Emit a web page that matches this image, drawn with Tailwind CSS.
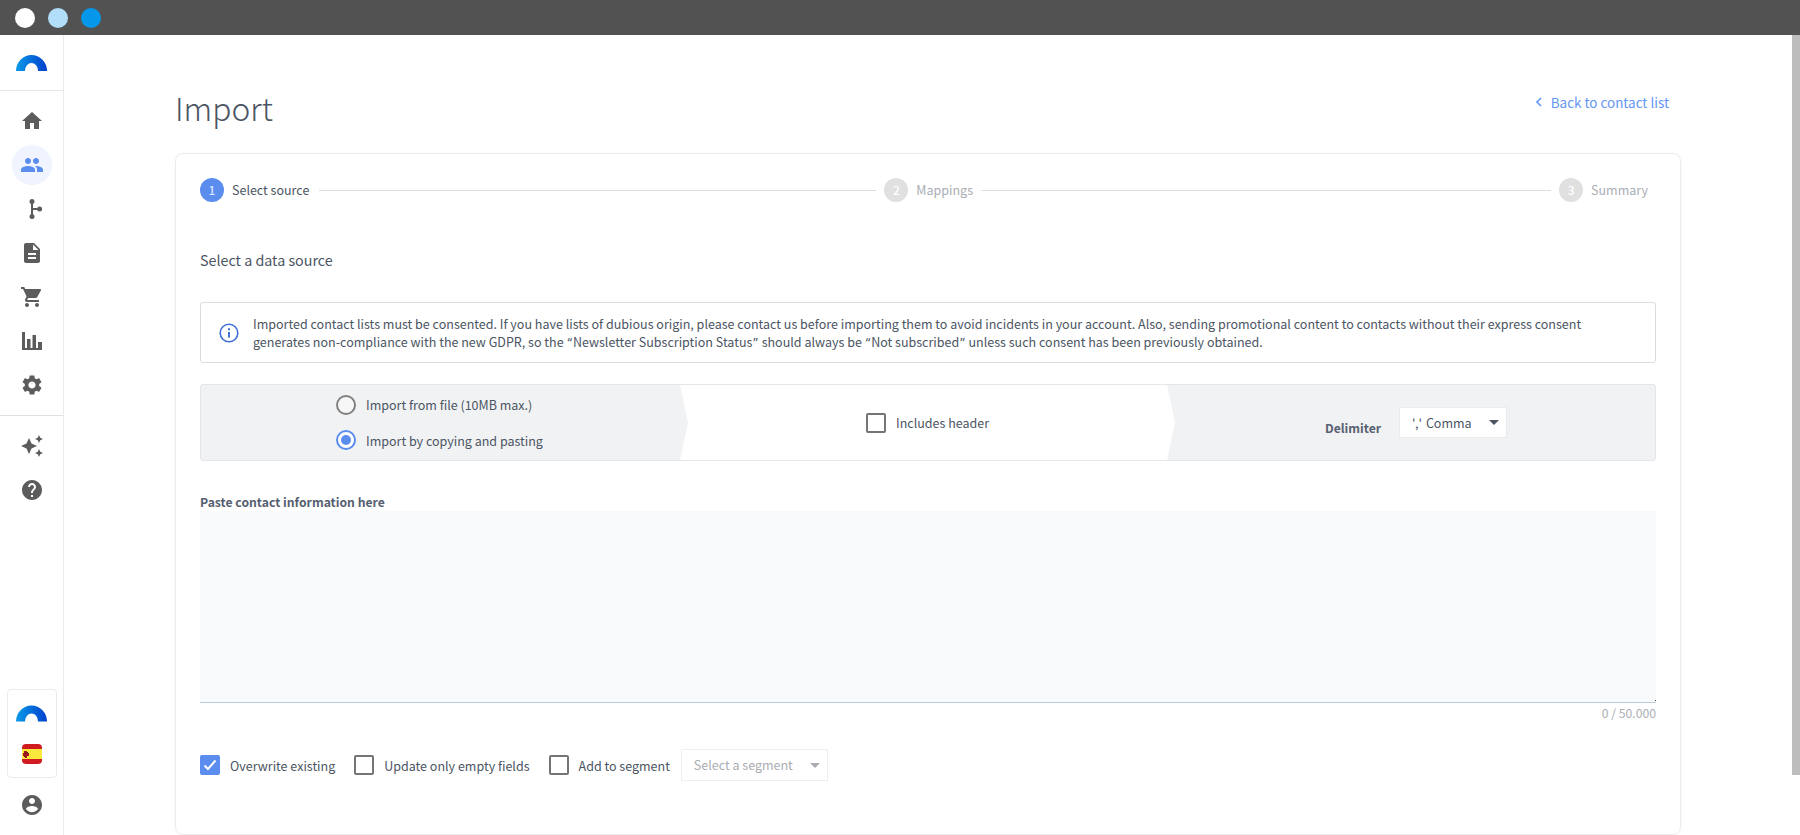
<!DOCTYPE html>
<html lang="en">
<head>
  <meta charset="UTF-8" />
  <meta name="viewport" content="width=device-width, initial-scale=1" />
  <title>Import</title>
  <script src="https://cdn.jsdelivr.net/npm/@tailwindcss/browser@4"></script>
</head>
<body class="relative h-[835px] overflow-hidden bg-white font-['Noto_Sans_CJK_SC',sans-serif] text-[#4b5563]">
  <svg class="absolute w-0 h-0" aria-hidden="true">
    <defs>
      <linearGradient id="logoGrad" x1="0" x2="1" y1="0" y2="0">
        <stop offset="0" stop-color="#0a9be8" />
        <stop offset="1" stop-color="#0040cc" />
      </linearGradient>
    </defs>
  </svg>

  <!-- window bar -->
  <div class="h-[35px] bg-[#525252] flex items-center gap-[13px] pl-[15px]">
    <span class="w-5 h-5 rounded-full bg-white"></span>
    <span class="w-5 h-5 rounded-full bg-[#b3defa]"></span>
    <span class="w-5 h-5 rounded-full bg-[#0598ea]"></span>
  </div>

  <div class="flex h-[800px]">
    <!-- sidebar -->
    <aside class="w-[64px] shrink-0 border-r border-[#ebebeb] flex flex-col text-[#5c5c5c]">
      <div class="h-[56px] border-b border-[#e6e6e6] flex justify-center pt-[20px] shrink-0">
        <svg width="31" height="16" viewBox="0 0 31 16"><path fill="url(#logoGrad)" d="M0 16A15.5 16 0 0 1 31 16H22A6.5 8 0 0 0 9 16Z" /></svg>
      </div>
      <nav class="flex flex-col gap-1 items-center pt-[10px] pb-[10px] border-b border-[#e0e0e0]">
        <a class="w-10 h-10 flex items-center justify-center"><svg class="w-6 h-6 fill-current" viewBox="0 0 24 24"><path d="M10 20v-6h4v6h5v-8h3L12 3 2 12h3v8z" /></svg></a>
        <a class="w-10 h-10 rounded-full bg-[#eff4fe] text-[#5b8def] flex items-center justify-center"><svg class="w-6 h-6 fill-current" viewBox="0 0 24 24"><path d="M16 11c1.66 0 2.99-1.34 2.99-3S17.66 5 16 5c-1.66 0-3 1.34-3 3s1.34 3 3 3zm-8 0c1.66 0 2.99-1.34 2.99-3S9.66 5 8 5C6.34 5 5 6.34 5 8s1.34 3 3 3zm0 2c-2.33 0-7 1.17-7 3.5V19h14v-2.5c0-2.33-4.67-3.5-7-3.5zm8 0c-.29 0-.62.02-.97.05 1.16.84 1.97 1.97 1.97 3.45V19h6v-2.5c0-2.33-4.67-3.5-7-3.5z" /></svg></a>
        <a class="w-10 h-10 flex items-center justify-center"><svg class="w-6 h-6 fill-current" viewBox="0 0 24 24"><path d="M11 6h2v12h-2z" /><path d="M12 11h7v2h-7z" /><circle cx="12" cy="4.6" r="2.5" /><circle cx="12" cy="19.4" r="2.5" /><circle cx="19.6" cy="12" r="2.5" /></svg></a>
        <a class="w-10 h-10 flex items-center justify-center"><svg class="w-6 h-6 fill-current" viewBox="0 0 24 24"><path d="M14 2H6c-1.1 0-1.99.9-1.99 2L4 20c0 1.1.89 2 1.99 2H18c1.1 0 2-.9 2-2V8l-6-6zm2 16H8v-2h8v2zm0-4H8v-2h8v2zm-3-5V3.5L18.5 9H13z" /></svg></a>
        <a class="w-10 h-10 flex items-center justify-center"><svg class="w-6 h-6 fill-current" viewBox="0 0 24 24"><path d="M7 18c-1.1 0-1.99.9-1.99 2S5.9 22 7 22s2-.9 2-2-.9-2-2-2zM1 2v2h2l3.6 7.59-1.35 2.45c-.16.28-.25.61-.25.96 0 1.1.9 2 2 2h12v-2H7.42c-.14 0-.25-.11-.25-.25l.03-.12.9-1.63h7.45c.75 0 1.41-.41 1.75-1.03l3.58-6.49c.08-.14.12-.31.12-.48 0-.55-.45-1-1-1H5.21l-.94-2H1zm16 16c-1.1 0-1.99.9-1.99 2s.89 2 1.99 2 2-.9 2-2-.9-2-2-2z" /></svg></a>
        <a class="w-10 h-10 flex items-center justify-center"><svg class="w-5 h-[18px] fill-current" viewBox="0 0 20 18"><path d="M0 0h3v18H0zM5 7h3.5v11H5zM10.5 3H14v15h-3.5zM16 10h4v8h-4zM0 16h20v2H0z" /></svg></a>
        <a class="w-10 h-10 flex items-center justify-center"><svg class="w-6 h-6 fill-current" viewBox="0 0 24 24"><path d="M19.14 12.94c.04-.3.06-.61.06-.94 0-.32-.02-.64-.07-.94l2.03-1.58c.18-.14.23-.41.12-.61l-1.92-3.32c-.12-.22-.37-.29-.59-.22l-2.39.96c-.5-.38-1.03-.7-1.62-.94l-.36-2.54c-.04-.24-.24-.41-.48-.41h-3.84c-.24 0-.43.17-.47.41l-.36 2.54c-.59.24-1.13.57-1.62.94l-2.39-.96c-.22-.08-.47 0-.59.22L2.74 8.87c-.12.21-.08.47.12.61l2.03 1.58c-.05.3-.09.63-.09.94s.02.64.07.94l-2.03 1.58c-.18.14-.23.41-.12.61l1.92 3.32c.12.22.37.29.59.22l2.39-.96c.5.38 1.03.7 1.62.94l.36 2.54c.05.24.24.41.48.41h3.84c.24 0 .44-.17.47-.41l.36-2.54c.59-.24 1.13-.56 1.62-.94l2.39.96c.22.08.47 0 .59-.22l1.92-3.32c.12-.22.07-.47-.12-.61l-2.01-1.58zM12 15.6c-1.98 0-3.6-1.62-3.6-3.6s1.62-3.6 3.6-3.6 3.6 1.62 3.6 3.6-1.62 3.6-3.6 3.6z" /></svg></a>
      </nav>
      <div class="flex flex-col gap-1 items-center pt-[10px]">
        <a class="w-10 h-10 flex items-center justify-center"><svg class="w-6 h-6 fill-current" viewBox="0 0 24 24"><path d="M19 9l1.25-2.75L23 5l-2.75-1.25L19 1l-1.25 2.75L15 5l2.75 1.25L19 9zm-7.5.5L9 4 6.5 9.5 1 12l5.5 2.5L9 20l2.5-5.5L17 12l-5.5-2.5zM19 15l-1.25 2.75L15 19l2.75 1.25L19 23l1.25-2.75L23 19l-2.75-1.25L19 15z" /></svg></a>
        <a class="w-10 h-10 flex items-center justify-center"><svg class="w-6 h-6 fill-current" viewBox="0 0 24 24"><path d="M12 2C6.48 2 2 6.48 2 12s4.48 10 10 10 10-4.48 10-10S17.52 2 12 2zm1 17h-2v-2h2v2zm2.07-7.75l-.9.92C13.45 12.9 13 13.5 13 15h-2v-.5c0-1.1.45-2.1 1.17-2.83l1.24-1.26c.37-.36.59-.86.59-1.41 0-1.1-.9-2-2-2s-2 .9-2 2H8c0-2.21 1.79-4 4-4s4 1.79 4 4c0 .88-.36 1.68-.93 2.25z" /></svg></a>
      </div>
      <div class="mt-auto flex flex-col items-center pb-[10px]">
        <div class="w-[50px] h-[89px] border border-[#ebebeb] rounded-[4px] flex flex-col items-center pt-[15px]">
          <svg width="31" height="17" viewBox="0 0 31 16"><path fill="url(#logoGrad)" d="M0 16A15.5 16 0 0 1 31 16H22A6.5 8 0 0 0 9 16Z" /></svg>
          <svg class="mt-[22px] rounded-[4px]" width="20" height="20" viewBox="0 0 20 20">
            <rect width="20" height="20" fill="#d01c1f" />
            <rect y="5" width="20" height="10" fill="#fbe83c" />
            <path fill="#a5171b" d="M2 7h3v2h2v3H5v2H3v-2H1V9h1z" />
            <path fill="#2b2b2b" d="M3 9h1v1H3zM5 8h1v1H5zM2 12h1v1H2z" />
          </svg>
        </div>
        <a class="w-10 h-10 mt-[7px] flex items-center justify-center"><svg class="w-6 h-6 fill-current" viewBox="0 0 24 24"><path d="M12 2C6.48 2 2 6.48 2 12s4.48 10 10 10 10-4.48 10-10S17.52 2 12 2zm0 3c1.66 0 3 1.34 3 3s-1.34 3-3 3-3-1.34-3-3 1.34-3 3-3zm0 14.2c-2.5 0-4.71-1.28-6-3.22.03-1.99 4-3.08 6-3.08 1.99 0 5.97 1.09 6 3.08-1.29 1.94-3.5 3.22-6 3.22z" /></svg></a>
      </div>
    </aside>

    <!-- main -->
    <main class="flex-1 pl-[111px] pr-[119px] pt-[50px]">
      <div class="h-[68px] flex justify-between items-start">
        <h1 class="text-[31.7px] leading-[44px] font-light">Import</h1>
        <a class="mt-[7px] flex items-center gap-[9px] text-[13.45px] leading-[20px] text-[#6496f5] pr-[12px]">
          <svg width="6" height="10" viewBox="0 0 6 10"><path d="M5 1 1 5l4 4" fill="none" stroke="currentColor" stroke-width="1.6" /></svg>
          Back to contact list
        </a>
      </div>

      <section class="h-[682px] border border-[#ececec] rounded-lg shadow-[0_1px_4px_rgba(0,0,0,0.04)] px-6 pt-6">
        <!-- stepper -->
        <div class="flex items-center text-[12.5px] pr-[8px]">
          <span class="w-6 h-6 rounded-full bg-[#5b8def] text-[#dbe7fd] text-[12px] font-medium flex items-center justify-center">1</span>
          <span class="ml-2">Select source</span>
          <span class="w-[557px] h-px bg-[#dedede] ml-[10px] mr-2"></span>
          <span class="w-6 h-6 rounded-full bg-[#e0e0e0] text-white text-[12px] font-medium flex items-center justify-center">2</span>
          <span class="ml-2 text-[#a9adb3]">Mappings</span>
          <span class="flex-1 h-px bg-[#dedede] mx-2"></span>
          <span class="w-6 h-6 rounded-full bg-[#e0e0e0] text-white text-[12px] font-medium flex items-center justify-center">3</span>
          <span class="ml-2 text-[#a9adb3]">Summary</span>
        </div>

        <h2 class="mt-[46px] text-[14.3px] leading-6">Select a data source</h2>

        <!-- notice -->
        <div class="mt-[30px] h-[61px] border border-[#dcdcdc] rounded-[3px] flex items-center pl-[18px] text-[12.53px] leading-[18px] text-[#4b5563]">
          <svg class="w-5 h-5 shrink-0 text-[#3f6fd8]" viewBox="0 0 20 20" fill="none" stroke="currentColor"><circle cx="10" cy="10" r="8.8" stroke-width="1.6" /><path d="M10 9v5.5" stroke-width="2" /><path d="M10 5.2v2" stroke-width="2" /></svg>
          <p class="ml-[14px] pt-[2px]">Imported contact lists must be consented. If you have lists of dubious origin, please contact us before importing them to avoid incidents in your account. Also, sending promotional content to contacts without their express consent<br />generates non-compliance with the new GDPR, so the <span class="font-['Noto_Sans'] px-px">“</span>Newsletter Subscription Status<span class="font-['Noto_Sans'] px-px">”</span> should always be <span class="font-['Noto_Sans'] px-px">“</span>Not subscribed<span class="font-['Noto_Sans'] px-px">”</span> unless such consent has been previously obtained.</p>
        </div>

        <!-- source options -->
        <div class="mt-[21px] h-[77px] flex border border-[#e4e6e9] rounded-[3px] bg-[#f1f2f4] text-[12.5px]">
          <div class="w-[479px] shrink-0 pl-[135px] pt-[10px] flex flex-col gap-[15px]">
            <label class="flex items-center h-5">
              <span class="w-5 h-5 rounded-full border-2 border-[#808080] bg-[#f7f7f7]"></span>
              <span class="ml-[10px] pt-px">Import from file (10MB max.)</span>
            </label>
            <label class="flex items-center h-5">
              <span class="w-5 h-5 rounded-full border-2 border-[#5b8def] bg-white flex items-center justify-center"><span class="w-[10px] h-[10px] rounded-full bg-[#5b8def]"></span></span>
              <span class="ml-[10px] pt-[2px]">Import by copying and pasting</span>
            </label>
          </div>
          <div class="w-[495px] shrink-0 bg-white [clip-path:polygon(0_0,487px_0,495px_50%,487px_100%,0_100%,8px_50%)] pl-[186px] flex items-center">
            <span class="w-5 h-5 rounded-[2px] border-2 border-[#757575]"></span>
            <span class="ml-[10px] pt-[2px]">Includes header</span>
          </div>
          <div class="flex-1 pl-[150px] flex items-center">
            <span class="w-[74px] mt-3 font-bold text-[12.2px] text-[#566070]">Delimiter</span>
            <div class="w-[108px] h-[31px] bg-white border border-[#ebebeb] flex items-center justify-between pl-3 pr-[7px]">
              <span class="pt-[2px]"><span class="tracking-[1.2px]">','</span> Comma</span>
              <span class="w-0 h-0 border-x-[5px] border-x-transparent border-t-[5px] border-t-[#4b5563]"></span>
            </div>
          </div>
        </div>

        <!-- paste area -->
        <label class="block mt-[32px] text-[12.2px] leading-[18px] font-bold text-[#566070]">Paste contact information here</label>
        <div class="relative">
          <textarea class="block w-full h-[192px] bg-[#f9fafc] border-b border-[#bccbd8] outline-none resize-none"></textarea>
          <span class="absolute right-0 bottom-[2px] w-px h-px bg-[#444444]"></span>
        </div>
        <div class="text-right text-[12.2px] leading-5 text-[#a9adb3]">0 / 50.000</div>

        <!-- options -->
        <div class="mt-[26px] h-8 flex items-center text-[12.5px]">
          <span class="w-5 h-5 rounded-[2px] bg-[#5b8def] flex items-center justify-center"><svg width="14" height="12" viewBox="0 0 14 12"><path d="M1.5 6.5 5 10l7.5-8.5" fill="none" stroke="white" stroke-width="2" /></svg></span>
          <span class="ml-[10px] pt-[2px]">Overwrite existing</span>
          <span class="ml-[19px] w-5 h-5 rounded-[2px] border-2 border-[#757575]"></span>
          <span class="ml-[10px] pt-[2px]">Update only empty fields</span>
          <span class="ml-[19px] w-5 h-5 rounded-[2px] border-2 border-[#757575]"></span>
          <span class="ml-[10px] pt-[2px]">Add to segment</span>
          <div class="ml-[11px] w-[147px] h-8 border border-[#eeeeee] flex items-center justify-between pl-3 pr-[7px] text-[#a9adb3]">
            <span>Select a segment</span>
            <span class="w-0 h-0 border-x-[5px] border-x-transparent border-t-[5px] border-t-[#a9adb3]"></span>
          </div>
        </div>
      </section>
    </main>
  </div>

  <!-- page scrollbar thumb -->
  <div class="absolute right-0 top-[35px] w-2 h-[740px] bg-[#bdbdbd]"></div>
</body>
</html>
